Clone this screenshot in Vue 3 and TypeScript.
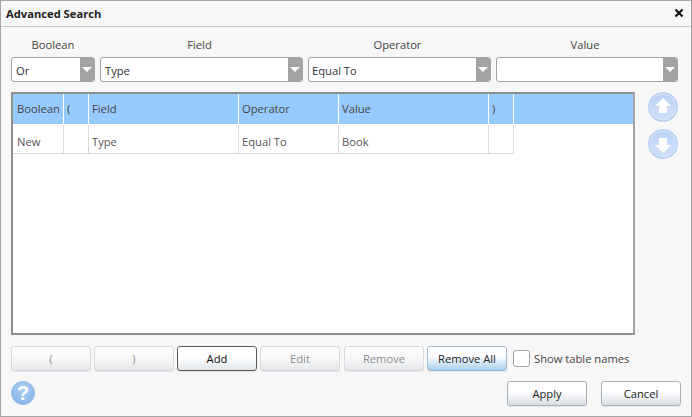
<script setup lang="ts">
const combos = [
  { label: 'Boolean', value: 'Or' },
  { label: 'Field', value: 'Type' },
  { label: 'Operator', value: 'Equal To' },
  { label: 'Value', value: '' },
]
const headers = ['Boolean', '(', 'Field', 'Operator', 'Value', ')']
const cells = ['New', '', 'Type', 'Equal To', 'Book', '']
const actions = [
  { text: '(', cls: 'disabled' },
  { text: ')', cls: 'disabled' },
  { text: 'Add', cls: 'focused' },
  { text: 'Edit', cls: 'disabled' },
  { text: 'Remove', cls: 'disabled' },
  { text: 'Remove All', cls: 'hover' },
]
</script>

<template>
  <div class="dialog">
    <header class="title">
      <span>Advanced Search</span>
      <svg class="close" width="10" height="10" viewBox="0 0 10 10">
        <path d="M1.5 1.5 8.5 8.5M8.5 1.5 1.5 8.5" stroke="#111" stroke-width="2.2" fill="none" />
      </svg>
    </header>
    <main class="body">
      <div class="filters">
        <div v-for="c in combos" :key="c.label" class="filter">
          <label>{{ c.label }}</label>
          <div class="combo">
            <span class="combo-text">{{ c.value }}</span>
            <span class="combo-arrow"><i></i></span>
          </div>
        </div>
      </div>

      <div class="middle">
        <div class="table">
          <div class="thead">
            <div v-for="(h, i) in headers" :key="i" class="th">{{ h }}</div>
          </div>
          <div class="trow">
            <div v-for="(c, i) in cells" :key="i" class="td">{{ c }}</div>
          </div>
        </div>
        <div class="movers">
          <svg width="30" height="30" viewBox="0 0 30 30">
            <defs>
              <linearGradient id="orb" x1="0" y1="0" x2="0" y2="1">
                <stop offset="0" stop-color="#bdd2f5" />
                <stop offset="1" stop-color="#cfe0fa" />
              </linearGradient>
            </defs>
            <circle cx="15" cy="15" r="14.8" fill="#aec8ee" />
            <circle cx="15" cy="15" r="13.6" fill="#dbe7fb" />
            <circle cx="15" cy="15" r="12.6" fill="url(#orb)" />
            <path d="M15 6 23 14H19V21H11V14H7Z" fill="#fff" />
          </svg>
          <svg width="30" height="30" viewBox="0 0 30 30">
            <circle cx="15" cy="15" r="14.8" fill="#aec8ee" />
            <circle cx="15" cy="15" r="13.6" fill="#dbe7fb" />
            <circle cx="15" cy="15" r="12.6" fill="url(#orb)" />
            <path d="M15 24 23 16H19V9H11V16H7Z" fill="#fff" />
          </svg>
        </div>
      </div>

      <div class="actions">
        <button v-for="a in actions" :key="a.text" class="btn" :class="a.cls">{{ a.text }}</button>
        <label class="check"><span class="box"></span>Show table names</label>
      </div>

      <div class="footer">
        <span class="help">?</span>
        <div class="footer-buttons">
          <button class="btn normal">Apply</button>
          <button class="btn normal">Cancel</button>
        </div>
      </div>
    </main>
  </div>
</template>

<style>
html, body { margin: 0; background: #f7f7f7; }
</style>

<style scoped>
.dialog {
  box-sizing: border-box;
  width: 692px;
  height: 417px;
  border: 1px solid #a6a6a6;
  background: #f7f7f7;
  font-family: "Open Sans", "Noto Sans", sans-serif;
  font-size: 11.2px;
  color: #444;
  overflow: hidden;
}
.title {
  box-sizing: border-box;
  height: 26px;
  border-bottom: 1px solid #c4c4c4;
  padding: 0 7px 1px 5px;
  display: flex;
  align-items: center;
  justify-content: space-between;
  font-weight: 700;
  color: #222;
}
.body { padding: 0 10px; }
.filters {
  display: grid;
  grid-template-columns: 84px 203px 183px 182px;
  gap: 5px;
}
.filter { display: flex; flex-direction: column; align-items: stretch; }
.filter label {
  height: 30px;
  box-sizing: border-box;
  padding-top: 10px;
  line-height: 16px;
  text-align: center;
  color: #444;
}
.filter:not(:first-child) label { padding-right: 4px; }
.combo {
  box-sizing: border-box;
  height: 25px;
  border: 1px solid #a3a3a3;
  border-radius: 3px;
  background: #fff;
  display: flex;
  align-items: center;
  justify-content: space-between;
  overflow: hidden;
}
.combo-text { padding: 2px 0 0 3px; color: #333; }
.filter:nth-child(-n+2) .combo-text { padding-left: 4px; }
.combo-arrow {
  width: 14px;
  height: 100%;
  background: #a3a3a3;
  display: flex;
  align-items: center;
  justify-content: center;
}
.combo-arrow i {
  width: 0;
  height: 0;
  border-left: 5px solid transparent;
  border-right: 5px solid transparent;
  border-top: 5px solid #fff;
}
.middle { display: flex; margin-top: 10px; gap: 13px; }
.table {
  box-sizing: border-box;
  width: 624px;
  height: 243px;
  border: 2px solid #8f8f8f;
  border-right-color: #a5a5a5;
  background: #fff;
}
.thead, .trow {
  display: grid;
  grid-template-columns: 51px 25px 150px 100px 150px 25px;
}
.thead { height: 31px; background: #97cbff; box-sizing: border-box; border-bottom: 1px solid #fff; }
.trow { height: 29px; width: 501px; box-sizing: border-box; border-bottom: 1px solid #d9d9d9; }
.th, .td {
  box-sizing: border-box;
  padding-left: 3px;
  display: flex;
  align-items: center;
  white-space: nowrap;
  color: #555;
}
.th:first-child, .td:first-child { padding-left: 4px; }
.th { border-right: 1px solid #fff; color: #444; padding-bottom: 1px; }
.td { border-right: 1px solid #d9d9d9; padding-top: 4px; }
.movers {
  display: flex;
  flex-direction: column;
  gap: 7px;
}
.actions {
  display: flex;
  align-items: center;
  margin-top: 11px;
  gap: 3px;
  height: 25px;
}
.btn {
  box-sizing: border-box;
  width: 80px;
  height: 25px;
  padding: 0;
  border: 1px solid #a8b2bc;
  border-radius: 3px;
  background: linear-gradient(#ffffff 40%, #d9dee4);
  font: inherit;
  color: #222;
  box-shadow: 0 1px 0 #e3e6ea;
}
.btn.disabled {
  border-color: #d6dade;
  background: linear-gradient(#fbfbfb 35%, #e5e8eb);
  color: #8e8e8e;
}
.btn.focused {
  border-color: #5a5a5a;
  background: linear-gradient(#ffffff 45%, #e1e5e9);
  color: #111;
}
.btn.hover {
  border-color: #a7b9cc;
  background: linear-gradient(#ffffff 40%, #a9cfee);
}
.actions .btn:nth-child(5) { margin-left: 1px; }
.check {
  display: flex;
  align-items: center;
  margin-left: 3px;
  color: #444;
}
.box {
  box-sizing: border-box;
  width: 17px;
  height: 17px;
  margin-right: 4px;
  border: 1px solid #a3a3a3;
  border-radius: 3px;
  background: #fff;
}
.footer {
  display: flex;
  justify-content: space-between;
  margin-top: 10px;
}
.help {
  box-sizing: border-box;
  width: 24px;
  height: 24px;
  border: 1px solid #8db6e8;
  border-radius: 50%;
  background: radial-gradient(circle at 50% 30%, #a9cdf3, #82b2e6);
  color: #fff;
  font-family: "Liberation Sans", sans-serif;
  font-weight: 700;
  font-size: 20px;
  line-height: 22px;
  text-align: center;
}
.footer-buttons {
  display: flex;
  gap: 14px;
}
</style>
